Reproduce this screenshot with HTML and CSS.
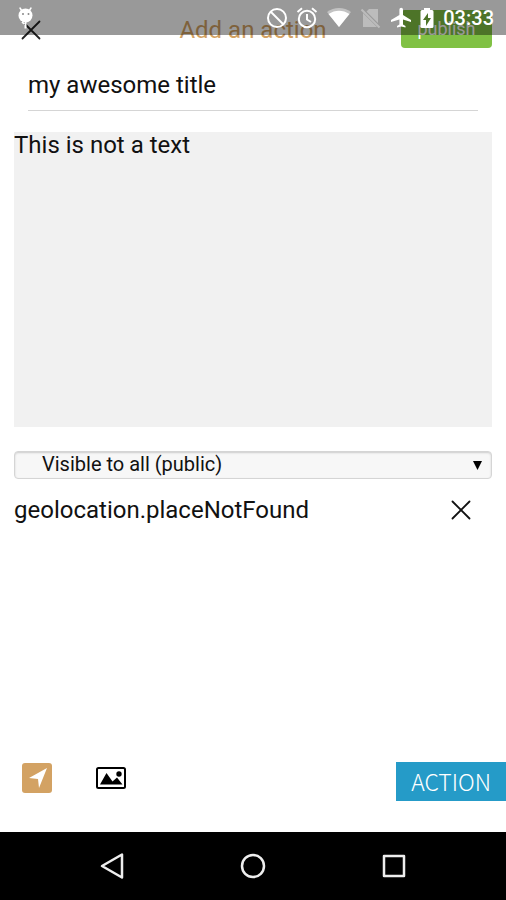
FILE: index.html
```html
<!DOCTYPE html>
<html lang="en">
<head>
<meta charset="utf-8">
<meta name="viewport" content="width=device-width, initial-scale=1">
<title>Add an action</title>
<link rel="stylesheet" href="styles.css">
</head>
<body>
<div class="status-bar">
  <svg class="status-debug" width="16" height="24" viewBox="0 0 16 24" aria-hidden="true">
    <path d="M4 5 2 2M11 5l2-3" stroke="#fff" stroke-width="1.500" stroke-linecap="round"/>
    <circle cx="7.500" cy="9.500" r="7" fill="#fff"/>
    <circle cx="5" cy="8" r="1" fill="#888"/><circle cx="10.500" cy="8" r="1" fill="#888"/>
    <path d="M4 15.500l2 2.500M7.500 16v6.500" stroke="#fff" stroke-width="2"/>
  </svg>
  <div class="status-icons">
    <svg width="22" height="22" viewBox="0 0 22 22" fill="none" stroke="#fff" stroke-width="2" aria-hidden="true">
      <circle cx="11" cy="11" r="9"/><path d="M4.500 4.500l13 13"/>
    </svg>
    <svg width="22" height="22" viewBox="0 0 22 22" fill="none" stroke="#fff" stroke-width="2" aria-hidden="true">
      <circle cx="11" cy="12" r="8.200"/><path d="M11 7v5.500l4 2.500M1.500 5l4.500-3.700M20.500 5L16 1.300"/>
    </svg>
    <svg width="26" height="22" viewBox="0 0 26 22" aria-hidden="true">
      <path d="M1 5C8-.5 18-.5 25 5L13 20z" fill="#fff" opacity=".4"/>
      <path d="M2.500 7C9 2.500 17 2.500 23.500 7L13 20z" fill="#fff"/>
    </svg>
    <svg width="22" height="22" viewBox="0 0 22 22" aria-hidden="true">
      <g opacity=".35"><path d="M9 2h9v14L6.500 4.500zM3 6L17 20H3z" fill="#fff"/><path d="M1.500 2.500l18 18" stroke="#fff" stroke-width="2"/></g>
    </svg>
    <svg width="22" height="22" viewBox="0 0 22 22" aria-hidden="true">
      <path d="M21 15v-2l-8-5V2.500a1.800 1.800 0 0 0-3.600 0V8l-8.400 5v2l8.400-2.500v5L7 19v1.600l4.200-1.100 4.300 1.100V19L13 17.500v-5z" fill="#fff"/>
    </svg>
    <svg width="14" height="22" viewBox="0 0 14 22" aria-hidden="true">
      <path fill-rule="evenodd" d="M4 1h6v2h2q1.500 0 1.500 1.500v15q0 1.500-1.500 1.500H2Q.5 21 .5 19.500v-15Q.5 3 2 3h2zM8 6l-5 7h3v6l5-8H8z" fill="#fff"/>
    </svg>
  </div>
  <span class="status-clock">03:33</span>
</div>

<header class="header">
  <button class="icon-button" type="button" aria-label="Close">
    <svg width="20" height="20" viewBox="0 0 20 20" fill="none" stroke="#222" stroke-width="1.800" stroke-linecap="round"><path d="M1.500 1.500l17 17M18.500 1.500l-17 17"/></svg>
  </button>
  <h1 class="header-title">Add an action</h1>
  <button class="publish" type="button">publish</button>
</header>

<main class="form">
  <input class="title-input" type="text" aria-label="Title" value="my awesome title">
  <textarea class="text-input" aria-label="Text">This is not a text</textarea>
  <div class="visibility">
    <select class="visibility-select" aria-label="Visibility">
      <option>Visible to all (public)</option>
    </select>
    <svg class="visibility-arrow" width="9" height="9" viewBox="0 0 9 9" aria-hidden="true"><path d="M0 0h9L4.500 9z"/></svg>
  </div>
  <div class="place">
    <span>geolocation.placeNotFound</span>
    <button class="icon-button" type="button" aria-label="Remove place">
      <svg width="20" height="20" viewBox="0 0 20 20" fill="none" stroke="#111" stroke-width="1.800" stroke-linecap="round"><path d="M1.500 1.500l17 17M18.500 1.500l-17 17"/></svg>
    </button>
  </div>
</main>

<div class="toolbar">
  <button class="tool" type="button" aria-label="Location">
    <svg width="30" height="30" viewBox="0 0 30 30"><rect width="30" height="30" rx="3" fill="#d3a263"/><path d="M25 5L7 15l9 1 1 9z" fill="#fff"/></svg>
  </button>
  <button class="tool" type="button" aria-label="Picture">
    <svg width="30" height="22" viewBox="0 0 30 22"><rect x="1" y="1" width="28" height="20" rx="1.500" fill="#fff" stroke="#000" stroke-width="2"/><path d="M4 17.500L10.500 6l6 8.500 4.500-4 5.500 7z"/><circle cx="23" cy="7" r="2.700"/></svg>
  </button>
  <button class="action" type="button">ACTION</button>
</div>

<nav class="system-nav" aria-label="System">
  <button class="icon-button" type="button" aria-label="Back">
    <svg width="26" height="28" viewBox="0 0 26 28" fill="none" stroke="#eee" stroke-width="2.500" stroke-linejoin="round"><path d="M23 2.500v23L3 14z"/></svg>
  </button>
  <button class="icon-button" type="button" aria-label="Home">
    <svg width="26" height="26" viewBox="0 0 26 26" fill="none" stroke="#eee" stroke-width="2.500"><circle cx="13" cy="13" r="11"/></svg>
  </button>
  <button class="icon-button" type="button" aria-label="Recent apps">
    <svg width="26" height="26" viewBox="0 0 26 26" fill="none" stroke="#eee" stroke-width="2.500" stroke-linejoin="round"><path d="M3 3h20v20H3z"/></svg>
  </button>
</nav>
</body>
</html>
```
FILE: styles.css
```css
* {
  box-sizing: border-box;
}

body {
  display: flex;
  flex-direction: column;
  min-height: 100vh;
  margin: 0;
  background: #fff;
  color: #111;
  font: 24px/28px Roboto, sans-serif;
}

button,
input,
textarea,
select {
  margin: 0;
  padding: 0;
  border: 0;
  border-radius: 0;
  background: none;
  color: inherit;
  font: inherit;
}

svg {
  display: block;
}

/* Translucent system bar over the page header */
.status-bar {
  position: absolute;
  top: 0;
  left: 0;
  right: 0;
  z-index: 1;
  display: flex;
  align-items: center;
  height: 35px;
  padding: 0 12px 0 18px;
  background: rgba(0, 0, 0, 0.4);
  color: #fff;
}

.status-icons {
  display: flex;
  align-items: center;
  gap: 8px;
  margin-left: auto;
}

.status-clock {
  margin-left: 9px;
  font-size: 20px;
  font-weight: 500;
}

.header {
  display: grid;
  grid-template-columns: 1fr auto 1fr;
  align-items: center;
  height: 60px;
  padding: 0 14px;
}

.icon-button {
  display: grid;
  place-items: center;
  width: 34px;
  height: 34px;
}

.header-title {
  margin: 0;
  color: #d3a263;
  font-size: 24px;
  font-weight: 400;
}

.publish {
  align-self: start;
  justify-self: end;
  width: 91px;
  height: 38px;
  margin-top: 10px;
  border-radius: 4px;
  background: #80c144;
  color: #fff;
  font-size: 18px;
  line-height: 20px;
}

.form {
  display: flex;
  flex: 1;
  flex-direction: column;
  padding: 0 14px;
}

.title-input {
  height: 51px;
  margin: 0 14px 21px;
  border-bottom: 1px solid #d5d5d5;
}

.text-input {
  height: 295px;
  margin-bottom: 24px;
  background: #f1f1f1;
  line-height: 26px;
  resize: none;
}

.visibility {
  display: grid;
  position: relative;
}

.visibility-select {
  appearance: none;
  height: 28px;
  padding: 0 0 2px 27px;
  border: 1px solid #d5d5d5;
  border-radius: 4px;
  background: #f7f7f7;
  box-shadow: inset 0 1px 2px #ccc;
  font-size: 20px;
  line-height: 24px;
}

.visibility-arrow {
  position: absolute;
  top: 10px;
  right: 10px;
  pointer-events: none;
}

.place {
  display: flex;
  align-items: center;
  justify-content: space-between;
  height: 62px;
  padding-right: 14px;
}

.toolbar {
  display: flex;
  align-items: flex-start;
  gap: 44px;
  margin-bottom: 31px;
  padding-left: 22px;
}

.tool {
  display: grid;
  place-items: center;
  height: 32px;
}

.action {
  height: 39px;
  margin-left: auto;
  padding: 0 15px;
  background: #259bc8;
  color: #fff;
  font: 300 23px/39px "Noto Sans CJK SC", sans-serif;
}

.system-nav {
  display: flex;
  align-items: center;
  justify-content: space-between;
  height: 68px;
  padding: 0 95px;
  background: #000;
}
```
